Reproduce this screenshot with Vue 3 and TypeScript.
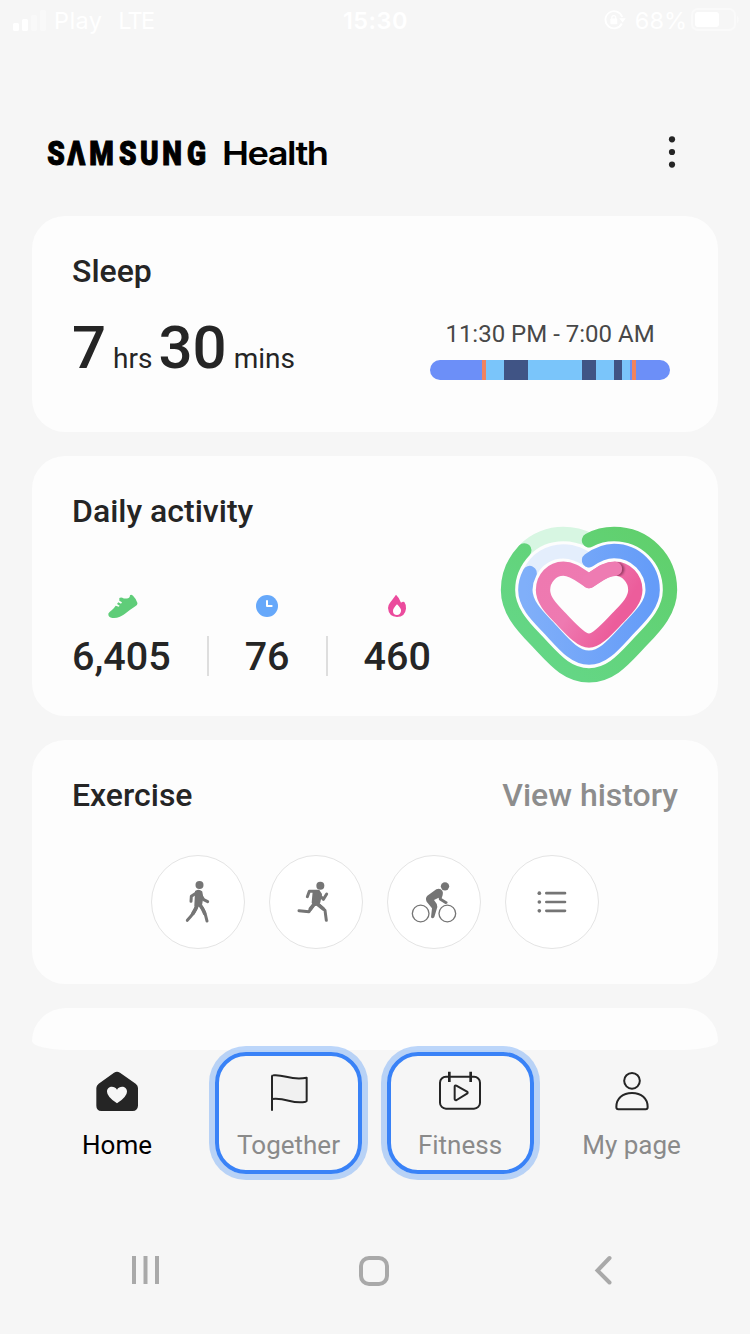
<script setup lang="ts">
interface Segment { color: string; width: number }
interface NavItem { id: string; label: string; active?: boolean; ring?: boolean }

const sleepStages: Segment[] = [
  { color: '#6c8ff8', width: 52 },
  { color: '#f0835f', width: 4 },
  { color: '#7ac5fa', width: 18 },
  { color: '#405485', width: 24 },
  { color: '#7ac5fa', width: 54 },
  { color: '#405485', width: 14 },
  { color: '#7ac5fa', width: 18 },
  { color: '#405485', width: 8 },
  { color: '#7ac5fa', width: 8 },
  { color: '#6c8ff8', width: 2 },
  { color: '#f0835f', width: 4 },
  { color: '#6c8ff8', width: 34 },
]

const navItems: NavItem[] = [
  { id: 'home', label: 'Home', active: true },
  { id: 'together', label: 'Together', ring: true },
  { id: 'fitness', label: 'Fitness', ring: true },
  { id: 'mypage', label: 'My page' },
]
</script>

<template>
  <div class="screen">
    <div class="status">
      <div class="status-side">
        <svg class="signal" width="36" height="22" viewBox="0 0 36 22">
          <rect x="1" y="14" width="6" height="8" rx="1.5" fill="#fff" />
          <rect x="10" y="10" width="6" height="12" rx="1.5" fill="#fff" />
          <rect x="19" y="6" width="6" height="16" rx="1.5" fill="#f9f9f9" />
          <rect x="28" y="1" width="6" height="21" rx="1.5" fill="#f9f9f9" />
        </svg>
        <span class="carrier">Play</span>
        <span class="network">LTE</span>
      </div>
      <div class="clock">15:30</div>
      <div class="status-side right">
        <svg width="22" height="20" viewBox="0 0 22 20">
          <path d="M17.8 13.5A8.6 8.6 0 1 1 18.2 7" fill="none" stroke="#fff" stroke-width="1.8" />
          <path d="M15.3 8.2h6.5l-3.2 4.3z" fill="#fff" />
          <rect x="6.3" y="8.6" width="7" height="5.6" rx="1" fill="#fff" />
          <path d="M7.8 9V7.6a2 2 0 0 1 4 0V9" fill="none" stroke="#fff" stroke-width="1.2" />
        </svg>
        <span class="percent">68%</span>
        <svg width="50" height="24" viewBox="0 0 50 24">
          <rect x="1" y="1" width="43" height="21" rx="6" fill="none" stroke="#fafafa" stroke-width="2" />
          <rect x="4" y="4" width="24" height="15" rx="3" fill="#fff" />
          <path d="M46.5 8.5q2 3 0 6z" fill="#fafafa" stroke="#fafafa" />
        </svg>
      </div>
    </div>

    <header class="header">
      <svg width="290" height="40" viewBox="0 0 290 40" aria-label="Samsung Health">
        <g transform="scale(0.86 1)">
          <text class="brand" x="1.4 24.6 50.4 85 109.300 135.300 164" y="31.600">SΛMSUNG</text>
        </g>
        <text class="product" x="176" y="32" textLength="105.500" lengthAdjust="spacingAndGlyphs">Health</text>
      </svg>
      <svg class="more" width="8" height="34" viewBox="0 0 8 34" fill="#252525">
        <circle cx="4" cy="4.3" r="3.1" /><circle cx="4" cy="17" r="3.1" /><circle cx="4" cy="29.6" r="3.1" />
      </svg>
    </header>

    <main class="cards">
      <section class="card sleep">
        <h2>Sleep</h2>
        <div class="sleep-row">
          <div class="duration"><b>7</b><span class="unit hours">hrs</span><b>30</b><span class="unit minutes">mins</span></div>
          <div class="timeline">
            <span>11:30 PM - 7:00 AM</span>
            <div class="stages">
              <i v-for="(s, n) in sleepStages" :key="n" :style="{ width: s.width + 'px', background: s.color }"></i>
            </div>
          </div>
        </div>
      </section>

      <section class="card activity">
        <div>
          <h2>Daily activity</h2>
          <div class="stats">
            <div class="stat">
              <svg class="shoe" width="30" height="24" viewBox="145 42 90 72">
                <path fill="#5fcd79" d="M146 103C146 97 155 93 163 84L168 77L177 80L180 77L172 72L176 67L184 71L187 67L179 62V54Q183 51 188 53Q196 58 207 54Q211 52 211 46Q214 42 220 47Q230 57 233 68Q235 75 227 79Q213 88 198 100Q181 114 163 114Q146 115 146 103Z" />
              </svg>
              <strong>6,405</strong>
            </div>
            <hr>
            <div class="stat">
              <svg width="24" height="24" viewBox="588 42 72 72">
                <circle cx="624" cy="78" r="33" fill="#66a8fa" />
                <path d="M624 63V78H638" fill="none" stroke="#fff" stroke-width="6" stroke-linecap="round" stroke-linejoin="round" />
              </svg>
              <strong>76</strong>
            </div>
            <hr>
            <div class="stat">
              <svg width="20" height="24" viewBox="984 42 60 72">
                <path fill="#eb4b9d" d="M1011 44Q1021 53 1026 68Q1031 64 1036 66Q1042 74 1041 86Q1038 111 1014 111Q989 110 987 84Q987 75 993 68Q1001 58 1011 44Z" />
                <path fill="#fff" d="M1014 73Q1028 86 1026 94Q1024 105 1014 105Q1002 105 1002 94Q1001 86 1014 73Z" />
              </svg>
              <strong>460</strong>
            </div>
          </div>
        </div>
        <svg class="heart" width="200" height="180" viewBox="0 0 600 540" fill="none" stroke-width="43" stroke-linecap="round" stroke-linejoin="round">
          <defs>
            <linearGradient id="g" x1="0" y1="1" x2="1" y2="0"><stop stop-color="#65d88b" /><stop offset="1" stop-color="#60cf6b" /></linearGradient>
            <linearGradient id="b" x1="0" y1="0" x2="1" y2="0"><stop stop-color="#80aff9" /><stop offset="1" stop-color="#659cf8" /></linearGradient>
            <linearGradient id="p" gradientUnits="userSpaceOnUse" x1="159" y1="161" x2="391" y2="300"><stop stop-color="#ee79b0" /><stop offset=".5" stop-color="#ee7ab1" /><stop offset="1" stop-color="#ec5d9b" /></linearGradient>
            <filter id="soft" x="-50%" y="-50%" width="200%" height="200%"><feGaussianBlur stdDeviation="2.5" /></filter>
            <clipPath id="tip"><path d="M380 140H400Q412 144 420 155V184H380Z" /></clipPath>
          </defs>
          <path stroke="#d7f6e2" d="M103 106C135 72 180 57 220 57C252 57 278 65 299 76" />
          <path stroke="#e4eefc" d="M119 174C139 132 178 109 220 109C254 109 277 123 297 136" />
          <path stroke="url(#g)" d="M297 76Q331 57 372 57C465 57 540 130 540 225C540 285 499 331 458 373C405 428 367 481 297 481C227 481 189 428 136 373C95 331 54 285 54 225C54 180 72 139 103 106" />
          <path stroke="url(#b)" d="M297 136Q335 108 372 108C437 108 488 160 488 225C488 267 453 302 423 333C378 380 344 428 297 428C250 428 216 380 171 333C141 302 106 267 106 225Q106 199 119 174" />
          <path stroke="url(#p)" d="M297 198C273 184 250 161 220 161C186 161 159 190 159 225C159 256 184 281 209 307C242 341 272 377 297 377C322 377 352 341 385 307C410 281 436 256 436 225C436 190 409 161 374 161C344 161 321 184 297 198Z" />
          <g clip-path="url(#tip)"><circle cx="382" cy="163" r="21" fill="#742848" opacity=".7" filter="url(#soft)" /></g>
          <path stroke="#ee7bb2" d="M297 198C321 184 344 162 375 161.500" />
        </svg>
      </section>

      <section class="card exercise">
        <div class="exercise-head"><h2>Exercise</h2><a>View history</a></div>
        <div class="modes">
          <button aria-label="Walking">
            <svg viewBox="33 45 282 282" fill="none" stroke="#757575" stroke-linecap="round" stroke-linejoin="round">
              <circle cx="178.500" cy="135" r="12" fill="#757575" stroke="none" />
              <path fill="#757575" stroke-width="6" d="M168 155Q177 149 184 156L187 172L183 196H166L167 177Z" />
              <path stroke-width="9" d="M170 158L154 169L153 184M184 168L191 179L203 185M174 193Q166 216 142 241M178 192Q195 211 201 243" />
              <path stroke-width="11" d="M172 191Q167 209 159 220M178 192Q189 207 194 220" />
            </svg>
          </button>
          <button aria-label="Running">
            <svg viewBox="387 45 282 282" fill="none" stroke="#757575" stroke-linecap="round" stroke-linejoin="round">
              <circle cx="541" cy="137" r="12" fill="#757575" stroke="none" />
              <path fill="#757575" stroke-width="6" d="M521 154H537L543 163L538 187L527 195L518 188Z" />
              <path stroke-width="9" d="M535 154H508L502 170M540 167L550 178L560 162M525 188L507 215L477 212M530 188L555 211L559 241" />
              <path stroke-width="11" d="M524 191L511 207M530 191L549 206" />
            </svg>
          </button>
          <button aria-label="Cycling">
            <svg viewBox="33 45 282 282" fill="none" stroke="#757575" stroke-linecap="round" stroke-linejoin="round">
              <circle cx="134" cy="220.500" r="25" stroke-width="4" />
              <circle cx="214" cy="220.500" r="25" stroke-width="4" />
              <circle cx="207" cy="139" r="12.500" fill="#757575" stroke="none" />
              <path fill="#757575" stroke="none" d="M154 167L181 148Q192 143 199 152Q202 157 200 165L197 175L215 186Q215 193 208 192L189 180L188 173L174 180Q184 191 184 201L175 231Q170 238 165 232L168 205L152 185Q147 174 154 167Z" />
            </svg>
          </button>
          <button aria-label="More">
            <svg viewBox="387 45 282 282" stroke="#757575" stroke-width="8" stroke-linecap="round">
              <path d="M511 159.500H567M511 186H567M511 212.500H567" />
              <g fill="#757575" stroke="none"><circle cx="490" cy="159.500" r="5.500" /><circle cx="490" cy="186" r="5.500" /><circle cx="490" cy="212.500" r="5.500" /></g>
            </svg>
          </button>
        </div>
      </section>

      <section class="card peek"></section>
    </main>

    <nav class="tabs">
      <div v-for="item in navItems" :key="item.id" class="tab" :class="{ active: item.active, ring: item.ring }">
        <svg v-if="item.id === 'home'" width="44" height="42" viewBox="225 214 132 126">
          <path fill="#252525" d="M282 219Q291 213 300 219L347 252Q354 257 354 265V318Q353 333 338 334H244Q229 333 229 318V265Q229 257 236 252Z" />
          <path fill="#f6f6f6" d="M291 311Q261 291 261 276C261 259 283 257 291 270C299 257 321 259 321 276Q321 291 291 311Z" />
        </svg>
        <svg v-else-if="item.id === 'together'" width="44" height="42" viewBox="744 214 132 126" fill="none" stroke="#252525" stroke-width="6" stroke-linecap="round" stroke-linejoin="round">
          <path fill="#f1f1f1" d="M759 298V230Q759 227 763 227C797 223 815 244 863 234V303Q863 305 860 306C819 315 804 293 759 298Z" />
          <path d="M759 298V331" />
        </svg>
        <svg v-else-if="item.id === 'fitness'" width="44" height="42" viewBox="189 214 132 126" fill="none" stroke="#252525" stroke-width="6" stroke-linejoin="round">
          <rect x="195" y="231" width="120" height="96" rx="18" />
          <path stroke-width="8" d="M223 216V247M287 216V247" />
          <path d="M239 261Q239 256 244 258L276 276Q280 279 276 282L245 301Q239 303 239 297Z" />
        </svg>
        <svg v-else width="44" height="42" viewBox="705 214 132 126" fill="none" stroke="#252525" stroke-width="6" stroke-linejoin="round">
          <circle cx="771" cy="243.500" r="23.500" />
          <path d="M730 329Q724 329 724 322C724 296 743 280 771 280C799 280 818 296 818 322Q818 329 812 329Z" />
        </svg>
        <span>{{ item.label }}</span>
      </div>
    </nav>

    <footer class="system">
      <svg width="30" height="30" viewBox="0 0 30 30"><path d="M3 1V29M14.500 1V29M26 1V29" stroke="#a9a9a9" stroke-width="4" /></svg>
      <svg class="home-key" width="30" height="30" viewBox="0 0 30 30"><rect x="2" y="2" width="26" height="26" rx="8" fill="none" stroke="#a9a9a9" stroke-width="4" /></svg>
      <svg width="30" height="30" viewBox="0 0 30 30"><path d="M19.500 3L7.500 15.500L19.500 27.500" fill="none" stroke="#a9a9a9" stroke-width="4" stroke-linecap="round" /></svg>
    </footer>
  </div>
</template>

<style>
body { margin: 0; background: #f6f6f6; }
</style>

<style scoped>
* { box-sizing: border-box; }
.screen { width: 750px; height: 1334px; overflow: hidden; background: #f6f6f6; font-family: Roboto, "Liberation Sans", sans-serif; color: #252525; display: flex; flex-direction: column; }
svg { display: block; flex: none; }
.status { height: 42px; display: grid; grid-template-columns: 1fr auto 1fr; align-items: center; padding: 0 9px 0 12px; color: #fff; font: 400 23.500px/42px Inter, sans-serif; }
.status-side { display: flex; align-items: center; }
.signal { margin: -2px 6px 0 0; }
.carrier { letter-spacing: .4px; margin-right: 16px; }
.network { letter-spacing: -1.8px; }
.clock { font-weight: 600; letter-spacing: .5px; margin-left: -2px; }
.right { justify-content: flex-end; }
.right svg { margin-top: -2px; }
.percent { margin: 0 4px 0 9px; }
.header { height: 174px; padding: 48px 74px 0 46px; display: flex; justify-content: space-between; align-items: center; }
.more { margin-top: -2px; }
.brand { font: 900 32.500px Roboto, sans-serif; fill: #000; stroke: #000; stroke-width: 1.1px; }
.product { font: 600 33.300px Inter, sans-serif; letter-spacing: -1.4px; fill: #000; }
.cards { display: flex; flex-direction: column; gap: 24px; padding: 0 32px; }
.card { background: #fdfdfd; border-radius: 33px; padding: 35px 40px 0; }
h2 { margin: 0; font-size: 32px; font-weight: 500; line-height: 40px; }
.sleep { height: 216px; }
.sleep-row { display: flex; justify-content: space-between; padding-right: 8px; }
.duration { display: flex; align-items: baseline; margin-top: 21px; height: 72px; line-height: 72px; }
.duration b { font-size: 60px; font-weight: 500; line-height: 72px; }
.unit { font-size: 28px; line-height: 40px; }
.hours { margin: 0 6px 0 7px; }
.minutes { margin-left: 7px; }
.timeline { display: flex; flex-direction: column; align-items: center; font-size: 24px; line-height: 30px; color: #484848; padding-top: 28px; }
.stages { display: flex; width: 240px; height: 20px; border-radius: 10px; overflow: hidden; margin-top: 11px; }
.stages i { flex: none; }
.activity { height: 260px; display: flex; justify-content: space-between; padding-right: 28px; }
.heart { margin-top: 24px; }
.stats { display: flex; gap: 36px; margin-top: 63px; }
.stat { display: flex; flex-direction: column; align-items: center; gap: 15px; }
.stat strong { font-size: 39.500px; font-weight: 500; line-height: 48px; }
.shoe { margin-left: 4px; }
hr { width: 2px; height: 40px; border: 0; background: #dedede; margin: 42px 0 0; }
.exercise { height: 244px; }
.exercise-head { display: flex; justify-content: space-between; }
.exercise-head a { font-size: 32px; font-weight: 500; line-height: 40px; color: #8d8d8d; }
.modes { display: flex; justify-content: center; gap: 24px; margin-top: 40px; }
.modes button { width: 94px; height: 94px; border: 1px solid #e4e4e4; border-radius: 50%; background: #fff; padding: 0; }
.modes svg { width: 94px; height: 94px; margin: -1px; }
.peek { height: 42px; padding: 0; border-radius: 34px 34px 36px 36px / 33px 33px 9px 9px; }
.tabs { position: relative; display: grid; grid-template-columns: repeat(4, 147px); gap: 24.500px; height: 122px; margin-top: 2px; padding-left: 43.500px; }
.tab { border-radius: 31px; display: flex; flex-direction: column; align-items: center; padding-top: 19px; color: #8a8a8a; font-size: 26px; }
.tab span { line-height: 32px; margin-top: 16px; }
.active { color: #000; }
.ring { border: 4px solid #3982f7; padding-top: 15px; box-shadow: 0 0 0 6px rgba(57, 137, 247, .33); }
.system { display: flex; justify-content: space-between; padding: 0 130px 0 131px; margin-top: 81px; }
.home-key { margin: 1px 0 0 -3px; }
</style>
